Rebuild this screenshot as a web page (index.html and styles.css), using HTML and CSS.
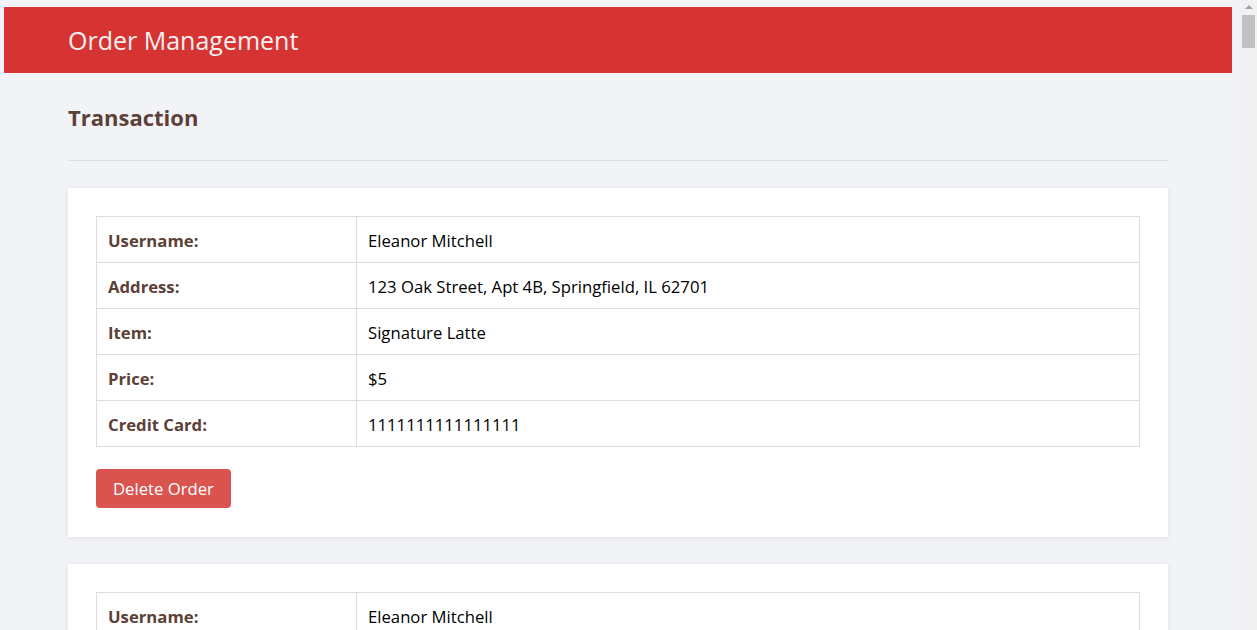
FILE: index.html
```html
<!DOCTYPE html>
<html lang="en">
<head>
<meta charset="utf-8">
<title>Order Management</title>
<link rel="stylesheet" href="styles.css">
</head>
<body>
<header class="topbar">
  <div class="container">
    <h1 class="brand">Order Management</h1>
  </div>
</header>
<main class="container">
  <h2 class="page-title">Transaction</h2>
  <hr class="divider">

  <section class="card">
    <table class="details">
      <tr><th>Username:</th><td>Eleanor Mitchell</td></tr>
      <tr><th>Address:</th><td>123 Oak Street, Apt 4B, Springfield, IL 62701</td></tr>
      <tr><th>Item:</th><td>Signature Latte</td></tr>
      <tr><th>Price:</th><td>$5</td></tr>
      <tr><th>Credit Card:</th><td>1111111111111111</td></tr>
    </table>
    <button class="btn-danger" type="button">Delete Order</button>
  </section>

  <section class="card">
    <table class="details">
      <tr><th>Username:</th><td>Eleanor Mitchell</td></tr>
      <tr><th>Address:</th><td>123 Oak Street, Apt 4B, Springfield, IL 62701</td></tr>
      <tr><th>Item:</th><td>Signature Latte</td></tr>
      <tr><th>Price:</th><td>$5</td></tr>
      <tr><th>Credit Card:</th><td>1111111111111111</td></tr>
    </table>
    <button class="btn-danger" type="button">Delete Order</button>
  </section>
</main>
<div class="scrollbar" aria-hidden="true">
  <div class="scroll-arrow"></div>
  <div class="scroll-thumb"></div>
</div>
</body>
</html>
```
FILE: styles.css
```css
html {
  background: #f2f3f7;
}
body {
  margin: 7px 25px 8px 4px;
  background: #f2f3f7;
  font-family: "Open Sans", "Noto Sans", "Liberation Sans", sans-serif;
  color: #000;
}
.container {
  max-width: 1100px;
  margin: 0 auto;
}
.topbar {
  background: #d63333;
  height: 66px;
  display: flex;
  align-items: center;
}
.topbar .container {
  width: 100%;
}
.brand {
  margin: 0;
  font-size: 25px;
  font-weight: 400;
  color: #f4f0f0;
  line-height: 1;
}
.page-title {
  margin: 29px 0 0;
  font-size: 22px;
  font-weight: 700;
  color: #5d4037;
  line-height: 30px;
}
.divider {
  margin: 28px 0 27px;
  border: 0;
  border-top: 1px solid #dedfe3;
}
.card {
  background: #fff;
  padding: 28px 28px 29px;
  box-shadow: 0 1px 6px rgba(0, 0, 0, 0.08);
  margin-bottom: 27px;
}
.details {
  width: 100%;
  border-collapse: collapse;
  font-size: 16.7px;
}
.details th,
.details td {
  border: 1px solid #dddddd;
  height: 44px;
  padding: 1px 11px 0;
  text-align: left;
  vertical-align: middle;
}
.details th {
  width: 237px;
  font-weight: 700;
  color: #5d4037;
}
.details td {
  color: #000;
}
.btn-danger {
  margin-top: 22px;
  display: block;
  background: #d9534f;
  color: #fff;
  border: 0;
  border-radius: 4px;
  height: 39px;
  padding: 0 17px;
  font-family: inherit;
  font-size: 16.7px;
  cursor: pointer;
}
.scrollbar {
  position: fixed;
  top: 0;
  right: 0;
  width: 17px;
  height: 100%;
  background: #f1f1f1;
}
.scroll-arrow {
  width: 0;
  height: 0;
  margin: 5px auto 0;
  border-left: 4px solid transparent;
  border-right: 4px solid transparent;
  border-bottom: 4px solid #a3a3a3;
}
.scroll-thumb {
  margin: 6px 0 0 2px;
  width: 13px;
  height: 33px;
  background: #c1c1c1;
}
```
